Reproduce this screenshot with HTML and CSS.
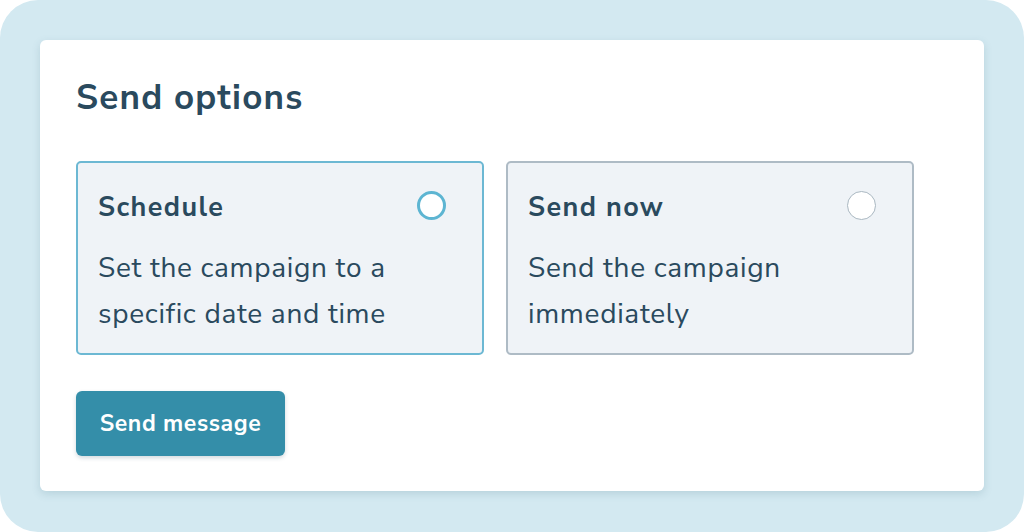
FILE: index.html
```html
<!DOCTYPE html>
<html>
<head>
<meta charset="utf-8">
<link rel="stylesheet" href="styles.css">
</head>
<body>
<div class="frame">
  <div class="panel">
    <h1 class="title">Send options</h1>
    <div class="options">
      <div class="option option-selected">
        <div class="option-head">
          <span class="option-name">Schedule</span>
          <span class="radio radio-on"></span>
        </div>
        <p class="option-desc">Set the campaign to a specific date and time</p>
      </div>
      <div class="option">
        <div class="option-head">
          <span class="option-name">Send now</span>
          <span class="radio"></span>
        </div>
        <p class="option-desc">Send the campaign immediately</p>
      </div>
    </div>
    <button class="send-btn">Send message</button>
  </div>
</div>
</body>
</html>
```
FILE: styles.css
```css
* { box-sizing: border-box; }
html, body { margin: 0; background: #ffffff; }
body { font-family: "Nunito Sans", Lato, "Open Sans", sans-serif; color: #2a4a5e; }
.frame {
  width: 1024px;
  height: 532px;
  background: #d3e9f1;
  border-radius: 38px;
  padding: 40px;
}
.panel {
  background: #ffffff;
  border-radius: 6px;
  height: 451px;
  padding: 35px 36px;
  box-shadow: 0 3px 8px rgba(60, 110, 130, 0.18);
}
.title {
  margin: 0;
  font-size: 35px;
  font-weight: 700;
  letter-spacing: 1.2px;
  line-height: 46px;
  color: #2a4a5e;
}
.options {
  display: flex;
  gap: 22px;
  margin-top: 40px;
}
.option {
  width: 408px;
  height: 194px;
  background: #eff3f7;
  border: 2px solid #aebbc5;
  border-radius: 5px;
  padding: 22px 36px 0 20px;
}
.option-selected { border-color: #6cb8d3; }
.option-head {
  display: flex;
  justify-content: space-between;
  align-items: center;
  height: 44px;
}
.option-name {
  font-size: 27px;
  font-weight: 700;
  letter-spacing: 1.4px;
  color: #2a4a5e;
}
.radio {
  width: 29px;
  height: 29px;
  border-radius: 50%;
  background: #ffffff;
  border: 1.5px solid #a9b7c1;
  margin-top: -4px;
}
.radio-on { border: 3.5px solid #5db5d2; }
.option-desc {
  margin: 16px 0 0;
  font-size: 28px;
  letter-spacing: 0.7px;
  line-height: 46px;
  color: #2a4a5e;
}
.send-btn {
  display: block;
  margin-top: 36px;
  width: 209px;
  height: 65px;
  border: 0;
  border-radius: 6px;
  background: #348ea9;
  color: #ffffff;
  font-family: inherit;
  font-size: 23px;
  font-weight: 700;
  letter-spacing: 0.6px;
  box-shadow: 0 2px 4px rgba(30, 70, 90, 0.2);
}
```
